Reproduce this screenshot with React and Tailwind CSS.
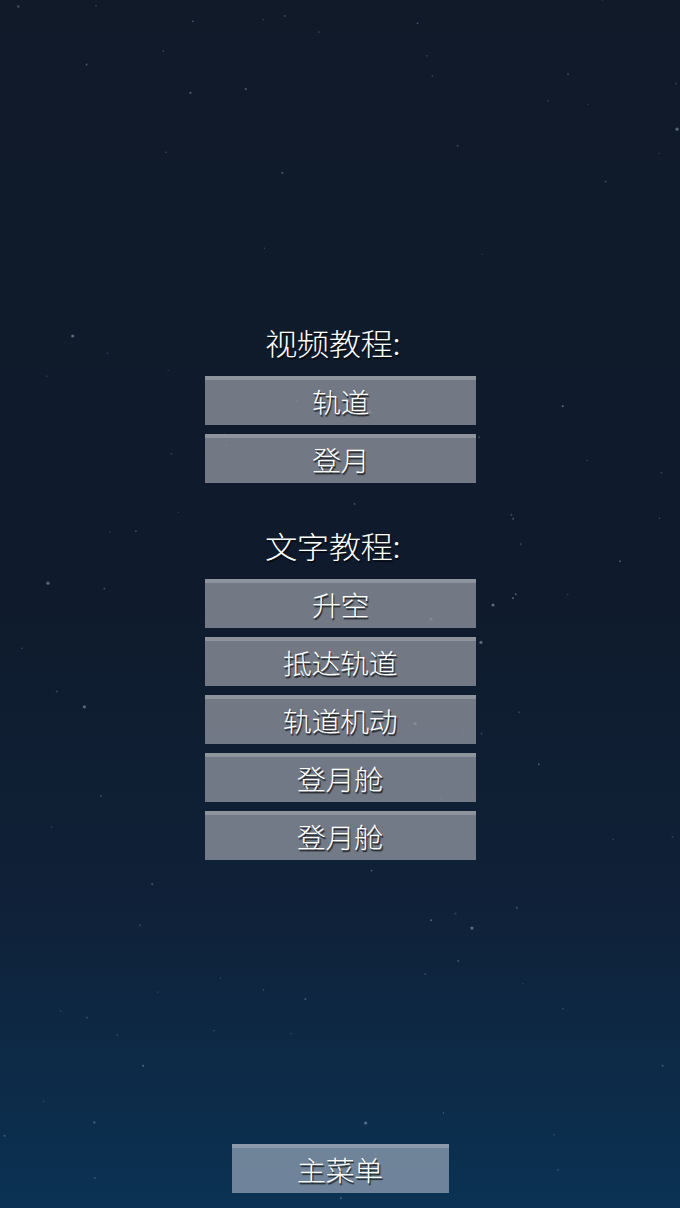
import React from "react";

function makeStars() {
  let s = 98765;
  const rnd = () => {
    s = (s * 16807) % 2147483647;
    return s / 2147483647;
  };
  const stars = [];
  for (let i = 0; i < 110; i++) {
    const big = rnd() < 0.08;
    stars.push({
      x: rnd() * 680,
      y: rnd() * 1208,
      r: big ? 1.6 : 0.7 + rnd() * 0.5,
      o: big ? 0.5 : 0.15 + rnd() * 0.3,
    });
  }
  return stars;
}
const STARS = makeStars();

const font = { fontFamily: '"Noto Sans CJK SC", "Noto Sans", sans-serif' };

function Btn({ label, main }) {
  return (
    <button
      className={
        "flex h-[49px] items-center justify-center border-t-4 text-[27px] font-light leading-none text-white [text-shadow:1px_2px_1px_rgba(0,0,0,0.75)] " +
        (main
          ? "w-[217px] border-[#8b9bac] bg-[rgba(140,156,174,0.78)]"
          : "w-[271px] border-[#8e949c] bg-[rgba(142,148,157,0.78)]")
      }
      style={font}
    >
      <span className="-mt-[2px] inline-block scale-x-[1.08] tracking-[-0.5px]">{label}</span>
    </button>
  );
}

function Heading({ children }) {
  return (
    <div
      className="flex h-[40px] items-center justify-center pr-[15px] text-[30px] font-light leading-none text-white [text-shadow:1px_2px_1px_rgba(0,0,0,0.6)]"
      style={font}
    >
      <span className="inline-block scale-x-[1.08] tracking-[-0.5px]">{children}</span>
    </div>
  );
}

export default function App() {
  return (
    <div className="relative flex min-h-[1208px] w-[680px] flex-col items-center overflow-hidden bg-[linear-gradient(to_bottom,#101a29_0%,#0f1b2d_50%,#0f2138_75%,#0b3254_100%)] pb-[15px] pt-[322px]">
      <svg className="absolute inset-0" width="680" height="1208">
        {STARS.map((st, i) => (
          <circle key={i} cx={st.x} cy={st.y} r={st.r} fill="#9fb3c8" opacity={st.o} />
        ))}
      </svg>
      <div className="relative z-10 flex flex-col items-center">
        <Heading>视频教程:</Heading>
        <div className="mt-[14px] flex flex-col gap-[9px]">
          <Btn label="轨道" />
          <Btn label="登月" />
        </div>
        <div className="mt-[42px]">
          <Heading>文字教程:</Heading>
        </div>
        <div className="mt-[14px] flex flex-col gap-[9px]">
          <Btn label="升空" />
          <Btn label="抵达轨道" />
          <Btn label="轨道机动" />
          <Btn label="登月舱" />
          <Btn label="登月舱" />
        </div>
      </div>
      <div className="relative z-10 mt-auto">
        <Btn label="主菜单" main />
      </div>
    </div>
  );
}
